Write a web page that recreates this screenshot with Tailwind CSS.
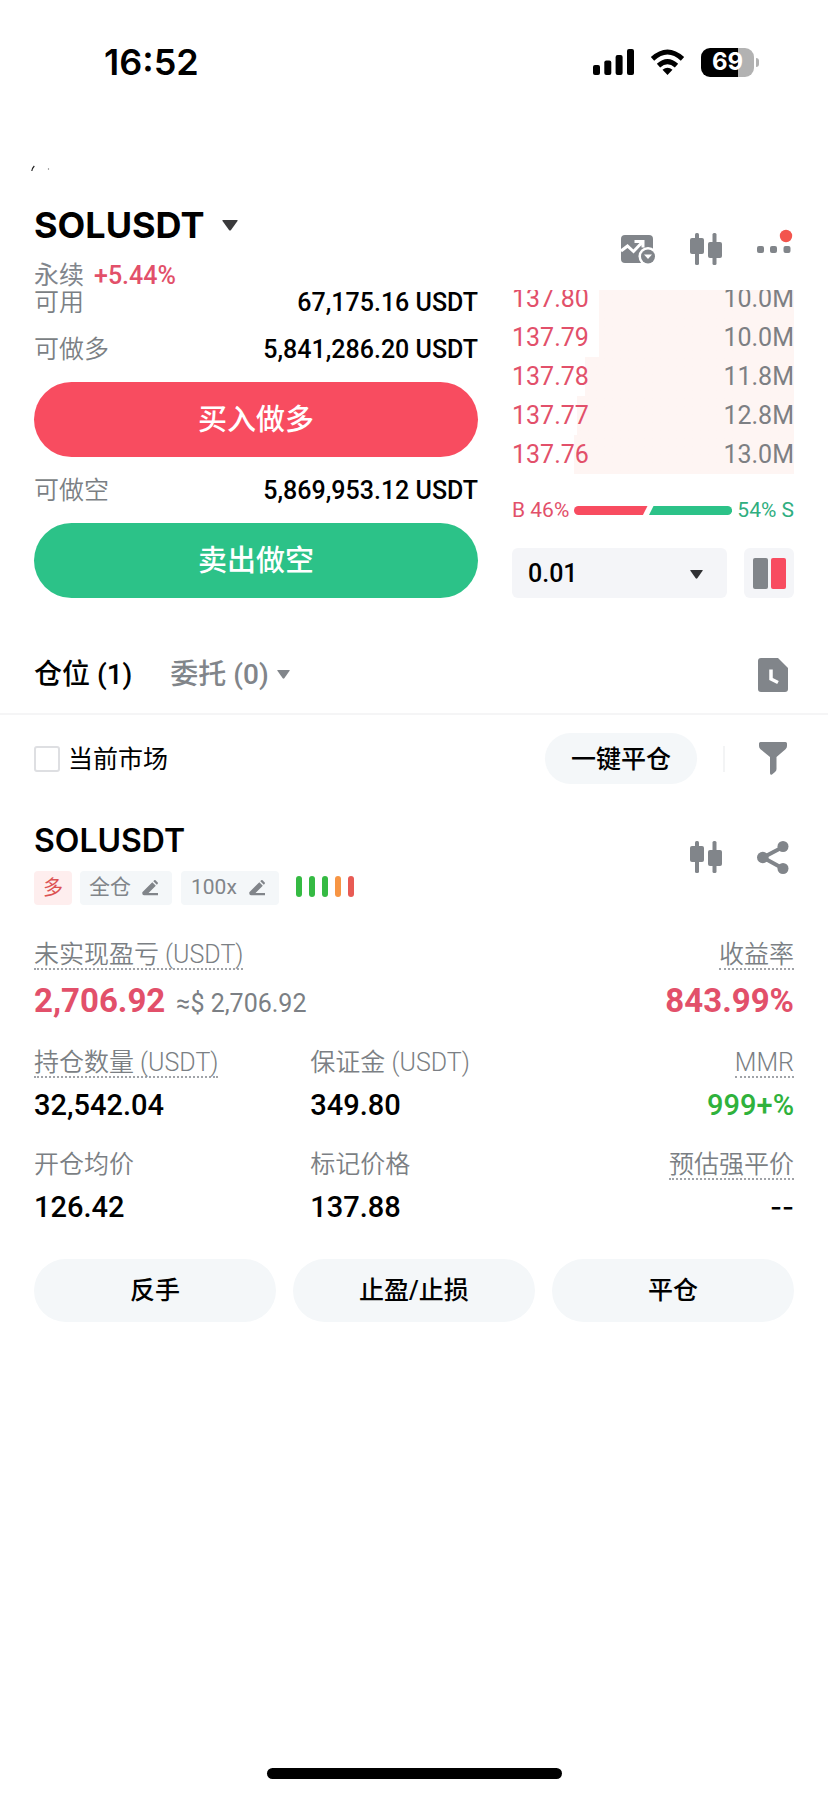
<!DOCTYPE html>
<html lang="zh-CN">
<head>
<meta charset="utf-8">
<meta name="viewport" content="width=device-width, initial-scale=1">
<title>SOLUSDT 永续</title>
<script src="https://cdn.jsdelivr.net/npm/@tailwindcss/browser@4"></script>
</head>
<body class="bg-white">
<svg class="hidden" aria-hidden="true">
  <symbol id="candles" viewBox="0 0 32 32">
    <rect x="5" y="0" width="4" height="32" rx="1.500"/><rect x="0" y="5" width="14" height="16" rx="2"/>
    <rect x="22.500" y="0" width="4" height="32" rx="1.500"/><rect x="18" y="9" width="14" height="16" rx="2"/>
  </symbol>
  <symbol id="caret" viewBox="0 0 16 11"><path d="M1 0h14q1.200 0 .5 1L9 10q-1 1.200-2 0L.5 1Q-.2 0 1 0z"/></symbol>
  <symbol id="pencil" viewBox="0 0 16 16">
    <path d="M10.300 2.200l3.500 3.500L6.500 13H16v2.300H2Q.3 15.300.3 13.600V12.200z"/><path d="M11.300 1.200l.9-.9q.7-.6 1.400 0l2.100 2.100q.6.7 0 1.400l-.9.9z"/>
  </symbol>
</svg>
<main class="flex min-h-screen flex-col font-[Roboto,'Noto_Sans_CJK_SC',sans-serif] text-black">
  <div class="flex h-[124px] items-center justify-between pr-[69px] pl-[104px]">
    <time class="font-[Inter,sans-serif] text-[36px] font-semibold">16:52</time>
    <div class="flex items-center gap-4">
      <svg class="h-[26px] w-[41px]" viewBox="0 0 41 26"><rect y="16" width="7" height="10" rx="2"/><rect x="11.300" y="11.500" width="7" height="14.500" rx="2"/><rect x="22.600" y="6" width="7" height="20" rx="2"/><rect x="34" y="0" width="7" height="26" rx="2"/></svg>
      <svg class="h-[26px] w-[35px]" viewBox="0 0 35 26"><path d="M17.500 26l-5-5.200q5-4.200 10 0z"/><path d="M8.500 16.600q9-8 18 0M2.500 9.800q15-13.600 30 0" fill="none" stroke="#000" stroke-width="5"/></svg>
      <div class="flex items-center gap-[2px]">
        <div class="flex h-[29px] w-[53px] items-center justify-center rounded-[9px] bg-linear-to-r from-black from-69% to-[#b2b2b2] to-69% font-[Inter,sans-serif] text-[24px] font-bold text-white">69</div>
        <div class="h-[9px] w-[3px] rounded-r-full bg-[#b2b2b2]"></div>
      </div>
    </div>
  </div>
  <div class="h-[76px] px-[31px] pt-10"><svg class="h-2 w-5" viewBox="0 0 20 8"><path d="M.8 7Q1.300 4 3.300 2" fill="none" stroke="#222" stroke-width="1.200"/><circle cx="17.500" cy="5" r=".7" fill="#777"/></svg></div>

  <header class="flex h-[90px] justify-between px-[34px]">
    <div>
      <button class="flex h-[50px] items-center gap-[18px]"><h1 class="font-[Inter,sans-serif] text-[36px] font-bold">SOLUSDT</h1><svg class="h-[11px] w-4 fill-[#3a3a3c]"><use href="#caret"/></svg></button>
      <p class="mt-[11px] flex h-[30px] items-center gap-[10px] text-[25px] text-[#81858c]">永续 <span class="font-medium text-[#e2506a]">+5.44%</span></p>
    </div>
    <div class="flex gap-[35px] pt-[33px] pr-[2px] text-[#81858a]">
      <button aria-label="图表" class="h-8 w-[34px]"><svg class="h-8 w-[34px]" viewBox="0 0 34 32"><rect y="2" width="32" height="28" rx="4" fill="currentColor"/><path d="M0 18l6.500-5 6 5.500L20.500 10M13.500 8.500H22v6" fill="none" stroke="#fff" stroke-width="3"/><circle cx="27" cy="23.500" r="9.500" fill="#fff"/><circle cx="27" cy="23.500" r="7" fill="currentColor"/><path d="M23 21.500h8L27 26z" fill="#fff"/></svg></button>
      <button aria-label="K线" class="size-8"><svg class="size-8 fill-current"><use href="#candles"/></svg></button>
      <button aria-label="更多" class="h-8 w-[35px]"><svg class="h-8 w-[35px] overflow-visible" viewBox="0 0 35 32"><g fill="currentColor"><rect y="13" width="7" height="7" rx="2"/><rect x="13" y="13" width="7" height="7" rx="2"/><rect x="26.500" y="13" width="7" height="7" rx="2"/></g><circle cx="29" cy="3" r="6.200" fill="#f3554d"/></svg></button>
    </div>
  </header>

  <section class="flex gap-[34px] px-[34px]">
    <div class="flex flex-1 flex-col gap-4 text-[25px] font-medium">
      <div class="flex h-[26px] items-center justify-between"><span class="font-[350] text-[#7b7f84]">可用</span><span>67,175.16 USDT</span></div>
      <div class="flex h-[34px] items-center justify-between pt-[2px]"><span class="font-[350] text-[#7b7f84]">可做多</span><span>5,841,286.20 USDT</span></div>
      <button class="h-[75px] rounded-full bg-[#f84c60] pt-[2px] text-[29px] text-white">买入做多</button>
      <div class="flex h-[34px] items-center justify-between pt-[2px]"><span class="font-[350] text-[#7b7f84]">可做空</span><span>5,869,953.12 USDT</span></div>
      <button class="h-[75px] rounded-full bg-[#2cc288] pt-[2px] text-[29px] text-white">卖出做空</button>
    </div>
    <div class="w-[282px]">
      <div class="flex h-[184px] flex-col justify-end overflow-hidden text-[25px] text-[#7d7f83]">
        <div class="flex h-[39px] shrink-0 items-center justify-between bg-linear-to-l from-[#fef5f3] from-69% to-transparent to-69%"><span class="text-[#e2506a]">137.80</span><span>10.0M</span></div>
        <div class="flex h-[39px] shrink-0 items-center justify-between bg-linear-to-l from-[#fef5f3] from-69% to-transparent to-69%"><span class="text-[#e2506a]">137.79</span><span>10.0M</span></div>
        <div class="flex h-[39px] shrink-0 items-center justify-between bg-linear-to-l from-[#fef5f3] from-74% to-transparent to-74%"><span class="text-[#e2506a]">137.78</span><span>11.8M</span></div>
        <div class="flex h-[39px] shrink-0 items-center justify-between bg-linear-to-l from-[#fef5f3] from-77% to-transparent to-77%"><span class="text-[#e2506a]">137.77</span><span>12.8M</span></div>
        <div class="flex h-[39px] shrink-0 items-center justify-between bg-linear-to-l from-[#fef5f3] from-78% to-transparent to-78%"><span class="text-[#e2506a]">137.76</span><span>13.0M</span></div>
      </div>
      <div class="mt-[22px] flex h-7 items-center gap-[5px] text-[21px] whitespace-nowrap">
        <span class="pt-[2px] text-[#e2506a]">B 46%</span>
        <svg class="h-[9px] min-w-0 flex-1" viewBox="0 0 157 9" preserveAspectRatio="none"><path d="M4.500 0H73l-4.500 9h-64a4.500 4.500 0 010-9z" fill="#f84c60"/><path d="M79 0h73.500a4.500 4.500 0 010 9h-78z" fill="#2cc288"/></svg>
        <span class="pt-[2px] text-[#2fae80]">54% S</span>
      </div>
      <div class="mt-6 flex items-center justify-between">
        <div class="relative">
          <select aria-label="价格精度" class="h-[50px] w-[215px] appearance-none rounded-md bg-[#f4f5f8] px-4 pt-[2px] text-[25px] font-medium"><option>0.01</option></select>
          <svg class="pointer-events-none absolute top-[22px] right-6 h-[9px] w-[13px] fill-[#303134]"><use href="#caret"/></svg>
        </div>
        <button aria-label="盘口样式" class="flex size-[50px] items-center justify-center gap-[3px] rounded-md bg-[#f4f5f8]"><span class="h-[31px] w-[15px] rounded-xs bg-[#81858a]"></span><span class="h-[31px] w-[15px] rounded-xs bg-[#f84c60]"></span></button>
      </div>
    </div>
  </section>

  <nav class="mt-9 flex h-[81px] items-center justify-between border-b-2 border-[#f5f5f6] px-[34px] pt-[2px] text-[28px] font-medium">
    <div class="flex gap-[38px]">
      <button>仓位 (1)</button>
      <button class="flex items-center gap-2 text-[#81858a]">委托 (0)<svg class="h-[9px] w-[13px] fill-current"><use href="#caret"/></svg></button>
    </div>
    <button aria-label="历史记录" class="mr-[6px]"><svg class="h-[34px] w-[30px]" viewBox="0 0 30 34"><path d="M3 0h17l10 10v21q0 3-3 3H3q-3 0-3-3V3q0-3 3-3z" fill="#81858a"/><path d="M13 11.500V21l7 3.500" fill="none" stroke="#fff" stroke-width="3.500"/></svg></button>
  </nav>

  <div class="mt-[18px] flex h-[51px] items-center justify-between px-[34px] text-[25px]">
    <label class="flex items-center gap-2"><input type="checkbox" class="size-[26px] appearance-none rounded-[3px] border-2 border-[#dedfe2]"><span class="pt-[2px]">当前市场</span></label>
    <div class="flex items-center">
      <button class="h-[51px] rounded-full bg-[#f4f7f9] px-[26px] pt-[2px] font-medium">一键平仓</button>
      <span class="mr-[34px] ml-[26px] h-[26px] w-[2px] bg-[#f3f4f5]"></span>
      <button aria-label="筛选" class="mr-[7px]"><svg class="h-[33px] w-7 fill-[#81858a]" viewBox="0 0 28 33"><path d="M1.500 0h25Q28 0 28 1.500V4q0 2-1.500 3.200L17.500 15V27q0 2-1.500 3l-3 2.500Q11 33.500 11 31V15L1.500 7.200Q0 6 0 4V1.500Q0 0 1.500 0z"/></svg></button>
    </div>
  </div>

  <section class="mt-9 px-[34px]">
    <div class="flex justify-between">
      <div>
        <h2 class="flex h-10 items-center pt-[2px] font-[Inter,sans-serif] text-[32px] font-semibold">SOLUSDT</h2>
        <div class="mt-[11px] flex h-[34px] items-center text-[21px] text-[#81858a]">
          <span class="flex h-[34px] w-[38px] items-center justify-center rounded-sm bg-[#feeeee] text-[20px] text-[#dc5353]">多</span>
          <button class="ml-2 flex h-[34px] items-center gap-[11px] rounded-sm bg-[#f4f7f9] pr-[14px] pl-[9px]">全仓<svg class="size-4 fill-current"><use href="#pencil"/></svg></button>
          <button class="ml-[9px] flex h-[34px] items-center gap-3 rounded-sm bg-[#f4f7f9] pr-[14px] pl-[10px]">100x<svg class="size-4 fill-current"><use href="#pencil"/></svg></button>
          <span class="mb-1 ml-[17px] flex gap-[7px]"><i class="h-[21px] w-[6px] rounded-full bg-[#35ba43]"></i><i class="h-[21px] w-[6px] rounded-full bg-[#35ba43]"></i><i class="h-[21px] w-[6px] rounded-full bg-[#35ba43]"></i><i class="h-[21px] w-[6px] rounded-full bg-[#f79544]"></i><i class="h-[21px] w-[6px] rounded-full bg-[#e85b54]"></i></span>
        </div>
      </div>
      <div class="flex items-start gap-[35px] pt-[21px] pr-[5px] text-[#81858a]">
        <button aria-label="K线"><svg class="size-8 fill-current"><use href="#candles"/></svg></button>
        <button aria-label="分享"><svg class="h-[33px] w-8" viewBox="0 0 32 33"><path d="M26 6L6 16.500 26 27.500" fill="none" stroke="currentColor" stroke-width="4"/><g fill="currentColor"><circle cx="26" cy="5.500" r="5.500"/><circle cx="5.800" cy="16.500" r="5.800"/><circle cx="26" cy="27.500" r="5.500"/></g></svg></button>
      </div>
    </div>

    <dl class="mt-[33px] flex justify-between text-[25px] text-[#7b7f84]">
      <div><dt class="h-8 w-fit border-b-2 border-dotted border-[#a0a3a8] leading-[33px] font-[350]">未实现盈亏 (USDT)</dt><dd class="mt-[10px] flex h-10 items-baseline gap-[11px] leading-[42px]"><b class="text-[33px] text-[#e2506a]">2,706.92</b>≈$ 2,706.92</dd></div>
      <div class="text-right"><dt class="ml-auto h-8 w-fit border-b-2 border-dotted border-[#a0a3a8] leading-[33px] font-[350]">收益率</dt><dd class="mt-[10px] h-10 text-[33px] leading-[42px] font-bold text-[#e2506a]">843.99%</dd></div>
    </dl>
    <dl class="mt-[26px] grid grid-cols-[4fr_4fr_3fr] gap-y-[27px] text-[29px] leading-8 font-medium">
      <div><dt class="h-8 w-fit border-b-2 border-dotted border-[#a0a3a8] text-[25px] leading-[33px] font-[350] whitespace-nowrap text-[#7b7f84]">持仓数量 (USDT)</dt><dd class="mt-[11px]">32,542.04</dd></div>
      <div><dt class="h-8 text-[25px] leading-[33px] font-[350] text-[#7b7f84]">保证金 (USDT)</dt><dd class="mt-[11px]">349.80</dd></div>
      <div class="text-right"><dt class="ml-auto h-8 w-fit border-b-2 border-dotted border-[#a0a3a8] text-[25px] leading-[33px] font-[350] text-[#7b7f84]">MMR</dt><dd class="mt-[11px] text-[#2fb23c]">999+%</dd></div>
      <div><dt class="h-8 text-[25px] leading-[33px] font-[350] text-[#7b7f84]">开仓均价</dt><dd class="mt-[11px]">126.42</dd></div>
      <div><dt class="h-8 text-[25px] leading-[33px] font-[350] text-[#7b7f84]">标记价格</dt><dd class="mt-[11px]">137.88</dd></div>
      <div class="text-right"><dt class="ml-auto h-8 w-fit border-b-2 border-dotted border-[#a0a3a8] text-[25px] leading-[33px] font-[350] text-[#7b7f84]">预估强平价</dt><dd class="mt-[11px] font-[Inter,sans-serif] text-[26px]">--</dd></div>
    </dl>

    <div class="mt-9 grid grid-cols-3 gap-[17px] text-[25px] font-medium">
      <button class="h-[63px] rounded-full bg-[#f4f7f9]">反手</button>
      <button class="h-[63px] rounded-full bg-[#f4f7f9]">止盈/止损</button>
      <button class="h-[63px] rounded-full bg-[#f4f7f9]">平仓</button>
    </div>
  </section>
  <div class="mx-auto mt-auto mb-[17px] h-[11px] w-[295px] rounded-full bg-black"></div>
</main>
</body>
</html>
